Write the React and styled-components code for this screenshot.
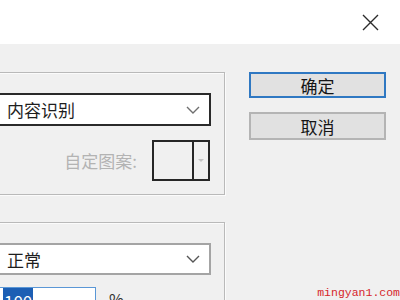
import React from 'react'
import styled, { createGlobalStyle } from 'styled-components'

const Global = createGlobalStyle`
  html, body {
    margin: 0;
    padding: 0;
    background: #f0f0f0;
    overflow: hidden;
  }
  body {
    font-family: 'Noto Sans CJK SC', 'Liberation Sans', sans-serif;
  }
`

const Window = styled.div`
  display: flex;
  flex-direction: column;
  height: 300px;
  overflow: hidden;
  position: relative;
  width: 400px;
`

const TitleBar = styled.div`
  align-items: center;
  background: #ffffff;
  display: flex;
  flex: 0 0 44px;
  justify-content: flex-end;
  padding-right: 21px;
`

const Close = styled.svg`
  display: block;
  height: 17px;
  width: 17px;
`

const Content = styled.div`
  display: flex;
  flex: 1;
  gap: 24px;
  padding-top: 28px;
`

const LeftColumn = styled.div`
  display: flex;
  flex: 0 0 240px;
  flex-direction: column;
  gap: 27px;
  margin-left: -15px;
`

const Group = styled.div`
  border: 1px solid #b9b9b9;
  box-shadow: inset 1px 1px 0 #fbfbfb, 1px 1px 0 #fbfbfb;
  display: flex;
  flex-direction: column;
  gap: ${({ gap }) => gap}px;
  padding: 20px 13px 13px 10px;
`

const Select = styled.div`
  align-items: center;
  background: #ffffff;
  border: ${({ strong }) => (strong ? '2px solid #2a2a2a' : '2px solid #a4a4a4')};
  box-sizing: border-box;
  color: #1e1e1e;
  display: flex;
  font-size: 17px;
  height: ${({ h }) => h}px;
  justify-content: space-between;
  padding: 0 9px 0 9px;
`

const Chevron = styled.svg`
  display: block;
  height: 8px;
  width: 14px;
`

const PatternRow = styled.div`
  align-items: center;
  display: flex;
  gap: 15px;
  justify-content: flex-end;
  padding-right: 1px;
`

const Label = styled.span`
  color: #b3b3b3;
  font-size: 17px;
`

const Swatch = styled.div`
  border: 2px solid #262626;
  box-sizing: border-box;
  display: flex;
  height: 41px;
  width: 58px;
`

const SwatchFace = styled.div`
  border-right: 2px solid #262626;
  flex: 0 0 38px;
`

const SwatchArrow = styled.div`
  align-items: center;
  display: flex;
  flex: 1;
  justify-content: center;
  &:after {
    border-left: 3px solid transparent;
    border-right: 3px solid transparent;
    border-top: 3px solid #c4c4c4;
    content: '';
  }
`

const AmountRow = styled.div`
  align-items: flex-start;
  display: flex;
  gap: 13px;
`

const Input = styled.div`
  background: #ffffff;
  border: 1px solid #5a97d6;
  box-sizing: border-box;
  height: 26px;
  padding: 1px 0 0 6px;
  width: 100px;
`

const Selected = styled.span`
  background: #1c5fb4;
  color: #ffffff;
  font-size: 17px;
  line-height: 22px;
  padding: 0 1px;
`

const Unit = styled.span`
  color: #333333;
  font-size: 16px;
  line-height: 22px;
  margin-top: 1px;
`

const RightColumn = styled.div`
  display: flex;
  flex: 0 0 137px;
  flex-direction: column;
  gap: 14px;
`

const Button = styled.div`
  align-items: center;
  background: #e1e1e1;
  border: ${({ primary }) => (primary ? '2px solid #2f78c2' : '2px solid #b4b4b4')};
  box-sizing: border-box;
  color: #151515;
  display: flex;
  font-size: 17px;
  height: ${({ h }) => h}px;
  justify-content: center;
`

const Watermark = styled.span`
  bottom: 1px;
  color: #d6262b;
  font-family: 'Liberation Mono', monospace;
  font-size: 11.5px;
  position: absolute;
  right: 0;
`

const Arrow = ({ color }) => (
  <Chevron viewBox="0 0 14 8">
    <path d="M1 1 L7 7 L13 1" fill="none" stroke={color} strokeWidth="1.4" />
  </Chevron>
)

const App = () => (
  <Window>
    <Global />
    <TitleBar>
      <Close viewBox="0 0 17 17">
        <path d="M1 1 L16 16 M16 1 L1 16" stroke="#2b2b2b" strokeWidth="1.4" />
      </Close>
    </TitleBar>
    <Content>
      <LeftColumn>
        <Group gap={14}>
          <Select strong h={33}>
            内容识别
            <Arrow color="#6f6f6f" />
          </Select>
          <PatternRow>
            <Label>自定图案:</Label>
            <Swatch>
              <SwatchFace />
              <SwatchArrow />
            </Swatch>
          </PatternRow>
        </Group>
        <Group gap={12}>
          <Select h={32}>
            正常
            <Arrow color="#555555" />
          </Select>
          <AmountRow>
            <Input><Selected>100</Selected></Input>
            <Unit>%</Unit>
          </AmountRow>
        </Group>
      </LeftColumn>
      <RightColumn>
        <Button primary h={26}>确定</Button>
        <Button h={28}>取消</Button>
      </RightColumn>
    </Content>
    <Watermark>mingyan1.com</Watermark>
  </Window>
)

export default App
